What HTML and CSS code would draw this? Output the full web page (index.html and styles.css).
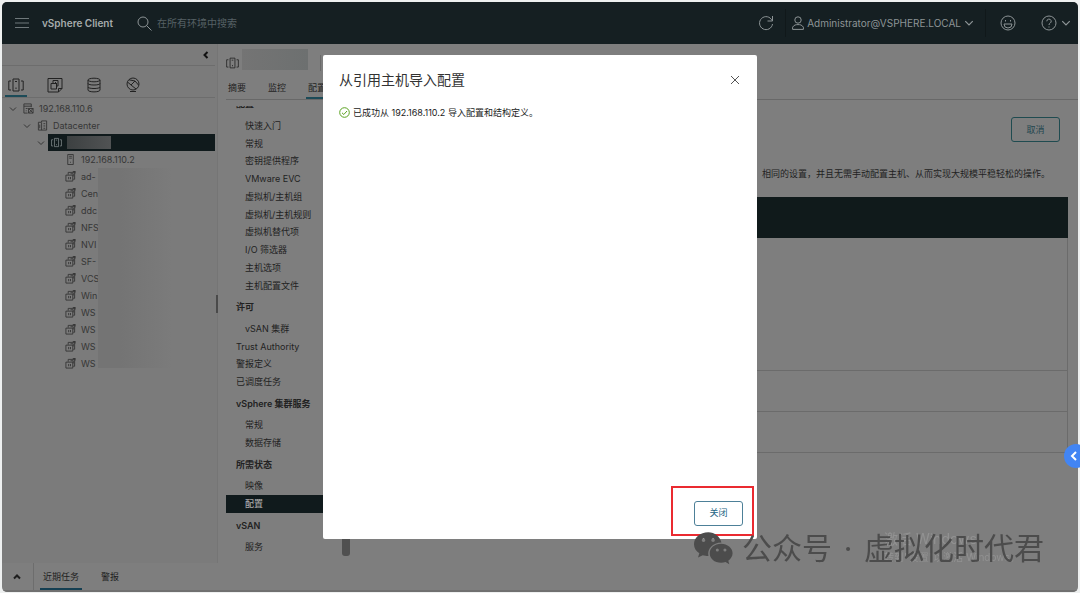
FILE: index.html
```html
<!DOCTYPE html>
<html lang="zh-CN">
<head>
  <meta charset="UTF-8">
  <meta name="viewport" content="width=device-width, initial-scale=1.0">
  <title>vSphere Client</title>
  <link rel="stylesheet" href="styles.css">
</head>
<body>
  <svg class="sprite" aria-hidden="true">
    <symbol id="i-down" viewBox="0 0 8 8"><path d="M1 2.500 4 5.500 7 2.500"/></symbol>
    <symbol id="i-cluster" viewBox="0 0 16 14"><path d="M5 1h6v12H5zM3 3H.8v9H3M13 3h2.200v9H13M7 3.500h2M8 9.500v1.500"/></symbol>
    <symbol id="i-vc" viewBox="0 0 12 12"><path d="M9 4.500V1H1v10h4M1 3.500h8M3 6h2M3 8.500h1M6 6h5v5H6zM6 6l5 5M11 6l-5 5"/></symbol>
    <symbol id="i-dc" viewBox="0 0 12 12"><path d="M1.500 11V2.500H5V1h5.500v10zM5 3v8M7 4h2M7 6.500h2M7 9h2M3 5v4"/></symbol>
    <symbol id="i-host" viewBox="0 0 10 12"><path d="M2 .5h6v11H2zM3.500 2.500h3M3.500 4.500h3M5 8.500v1"/></symbol>
    <symbol id="i-vm" viewBox="0 0 12 12"><path d="M3.500 4V1.500h7V9H9M1 4.500h7.500V11H1zM4 6.500v2.500M6 6.500v2.500M6 3h3v3"/><path class="fill" d="M8 0h3.500v3z"/></symbol>
  </svg>

  <div class="app">
    <header class="topbar">
      <button class="icon-btn menu" aria-label="菜单">
        <svg width="14" height="12" viewBox="0 0 14 12"><path d="M0 1.500h14M0 6h14M0 10.500h14"/></svg>
      </button>
      <a class="brand" href="#">vSphere Client</a>
      <form class="search">
        <svg width="15" height="15" viewBox="0 0 15 15"><circle cx="6" cy="6" r="5"/><path d="m9.500 9.500 5 5"/></svg>
        <input type="text" aria-label="搜索" placeholder="在所有环境中搜索">
      </form>
      <div class="tools">
        <button class="icon-btn refresh" aria-label="刷新">
          <svg width="16" height="16" viewBox="0 0 16 16"><path d="M14 5.500A6.500 6.500 0 1 0 14.500 9M14.500 1v5h-5"/></svg>
        </button>
        <button class="icon-btn user">
          <svg width="12" height="14" viewBox="0 0 12 14"><circle cx="6" cy="4" r="3.200"/><path d="M.6 13.400v-2.200C2 8.800 4 8.600 6 8.600s4 .2 5.400 2.600v2.200z"/></svg>
          <span>Administrator@VSPHERE.LOCAL</span>
          <svg width="10" height="10"><use href="#i-down"/></svg>
        </button>
        <button class="icon-btn smile" aria-label="反馈">
          <svg width="16" height="16" viewBox="0 0 16 16"><circle cx="8" cy="8" r="7"/><path d="M4 9a4 4 0 0 0 8 0z"/><path d="M5.500 5v1.500M10.500 5v1.500"/></svg>
        </button>
        <button class="icon-btn help" aria-label="帮助">
          <svg width="16" height="16" viewBox="0 0 16 16"><circle cx="8" cy="8" r="7"/><path d="M5.800 6.300a2.200 2.200 0 1 1 3.300 1.900C8.300 8.700 8 9 8 10M8 11.500v1"/></svg>
          <svg width="10" height="10"><use href="#i-down"/></svg>
        </button>
      </div>
    </header>

    <div class="body">
      <aside class="sidebar">
        <div class="collapse">
          <button class="icon-btn" aria-label="折叠">
            <svg width="8" height="8" viewBox="0 0 8 8"><path d="M5.500 1 2.500 4l3 3"/></svg>
          </button>
        </div>
        <nav class="inv-tabs">
          <a class="active" href="#" aria-label="主机和集群"><svg width="16" height="14"><use href="#i-cluster"/></svg></a>
          <a href="#" aria-label="虚拟机"><svg width="16" height="16" viewBox="0 0 16 16"><path d="M1 1.500h14v10l-3.500 3.500H1zM15 11.500h-3.500V15M6 6V3.500h5V9H9.500M4 6.500h5.500V12H4zM8 5l2 2"/></svg></a>
          <a href="#" aria-label="存储"><svg width="16" height="16" viewBox="0 0 16 16"><path d="M2 3v10c0 2.500 12 2.500 12 0V3M2 6.500c0 2 12 2 12 0M2 10c0 2 12 2 12 0"/><ellipse cx="8" cy="3" rx="6" ry="1.800"/></svg></a>
          <a href="#" aria-label="网络"><svg width="16" height="16" viewBox="0 0 16 16"><circle cx="8" cy="7" r="6"/><path d="M2.500 5 6 8l4-4 3.500 4M6 8l5 4M10 4 4 2.800M5 14.500h6"/></svg></a>
        </nav>
        <div class="tree-wrap">
          <ul class="tree">
            <li class="l0"><svg class="caret"><use href="#i-down"/></svg><svg class="ico"><use href="#i-vc"/></svg>192.168.110.6</li>
            <li class="l1"><svg class="caret"><use href="#i-down"/></svg><svg class="ico"><use href="#i-dc"/></svg>Datacenter</li>
            <li class="l2"><svg class="caret"><use href="#i-down"/></svg><div class="selected"><svg class="ico"><use href="#i-cluster"/></svg><span class="mask"></span></div></li>
            <li class="l3"><svg class="ico"><use href="#i-host"/></svg>192.168.110.2</li>
            <li class="l3"><svg class="ico"><use href="#i-vm"/></svg><span class="vm">ad-</span></li>
            <li class="l3"><svg class="ico"><use href="#i-vm"/></svg><span class="vm">Cen</span></li>
            <li class="l3"><svg class="ico"><use href="#i-vm"/></svg><span class="vm">ddc</span></li>
            <li class="l3"><svg class="ico"><use href="#i-vm"/></svg><span class="vm">NFS</span></li>
            <li class="l3"><svg class="ico"><use href="#i-vm"/></svg><span class="vm">NVI</span></li>
            <li class="l3"><svg class="ico"><use href="#i-vm"/></svg><span class="vm">SF-</span></li>
            <li class="l3"><svg class="ico"><use href="#i-vm"/></svg><span class="vm">VCS</span></li>
            <li class="l3"><svg class="ico"><use href="#i-vm"/></svg><span class="vm">Win</span></li>
            <li class="l3"><svg class="ico"><use href="#i-vm"/></svg><span class="vm">WS</span></li>
            <li class="l3"><svg class="ico"><use href="#i-vm"/></svg><span class="vm">WS</span></li>
            <li class="l3"><svg class="ico"><use href="#i-vm"/></svg><span class="vm">WS</span></li>
            <li class="l3"><svg class="ico"><use href="#i-vm"/></svg><span class="vm">WS</span></li>
          </ul>
          <div class="smudge"></div>
        </div>
        <span class="grip"></span>
      </aside>

      <main class="main">
        <div class="object">
          <svg width="13" height="12"><use href="#i-cluster"/></svg>
          <span class="mask"></span>
          <span class="sep"></span>
        </div>
        <nav class="tabs">
          <a href="#">摘要</a>
          <a href="#">监控</a>
          <a class="active" href="#">配置</a>
        </nav>
        <div class="config">
          <nav class="config-nav">
            <div class="cut">配置</div>
            <a href="#">快速入门</a>
            <a href="#">常规</a>
            <a href="#">密钥提供程序</a>
            <a href="#">VMware EVC</a>
            <a href="#">虚拟机/主机组</a>
            <a href="#">虚拟机/主机规则</a>
            <a href="#">虚拟机替代项</a>
            <a href="#">I/O 筛选器</a>
            <a href="#">主机选项</a>
            <a href="#">主机配置文件</a>
            <h4>许可</h4>
            <a href="#">vSAN 集群</a>
            <a class="top" href="#">Trust Authority</a>
            <a class="top" href="#">警报定义</a>
            <a class="top" href="#">已调度任务</a>
            <h4>vSphere 集群服务</h4>
            <a href="#">常规</a>
            <a href="#">数据存储</a>
            <h4>所需状态</h4>
            <a href="#">映像</a>
            <a class="active" href="#">配置</a>
            <h4>vSAN</h4>
            <a href="#">服务</a>
          </nav>
          <div class="scroll"><span></span></div>
          <section class="content">
            <button class="btn cancel">取消</button>
            <p class="desc">相同的设置，并且无需手动配置主机、从而实现大规模平稳轻松的操作。</p>
            <div class="band"></div>
            <div class="panel"></div>
            <div class="panel-row"></div>
            <div class="panel-row"></div>
          </section>
        </div>
      </main>
    </div>

    <footer class="bottom">
      <button class="icon-btn" aria-label="展开">
        <svg width="8" height="8" viewBox="0 0 8 8"><path d="M1 5.500 4 2.500l3 3"/></svg>
      </button>
      <nav>
        <a class="active" href="#">近期任务</a>
        <a href="#">警报</a>
      </nav>
    </footer>
  </div>

  <div class="overlay">
    <div class="modal" role="dialog" aria-labelledby="modal-title">
      <div class="modal-head">
        <h3 id="modal-title">从引用主机导入配置</h3>
        <button class="icon-btn" aria-label="关闭窗口">
          <svg width="10" height="10" viewBox="0 0 10 10"><path d="m1 1 8 8M9 1 1 9"/></svg>
        </button>
      </div>
      <p class="result">
        <svg width="11" height="11" viewBox="0 0 11 11"><circle cx="5.500" cy="5.500" r="4.800"/><path d="m3 5.800 1.800 1.700L8 4"/></svg>
        <span>已成功从 192.168.110.2 导入配置和结构定义。</span>
      </p>
      <div class="modal-foot">
        <button class="btn close">关闭</button>
      </div>
      <span class="marker"></span>
    </div>
  </div>

  <div class="activate">
    <strong>激活 Windows</strong>
    <span>转到"设置"以激活 Windows。</span>
  </div>

  <div class="watermark">
    <svg width="40" height="33" viewBox="0 0 42 34">
      <path fill-rule="evenodd" d="M15 0C6.500 0 0 5.500 0 12.500c0 4 2.200 7.300 5.600 9.600L4.200 26.500l5-2.500c1.900.5 3.600.9 6 .9C13.600 17.500 19.500 11 28.800 10.800 27.500 4.600 21.800 0 15 0zM10 6.500a1.900 1.900 0 1 1 0 3.800 1.900 1.900 0 0 1 0-3.800zM20 6.500a1.900 1.900 0 1 1 0 3.800 1.900 1.900 0 0 1 0-3.800z"/>
      <path fill-rule="evenodd" d="M28.500 12C21.500 12 16.500 16.500 16.500 22s5 10 12 10c1.600 0 3.100-.3 4.600-.7l4 2.200-1.100-3.700c2.700-2 4.500-4.700 4.500-7.800 0-5.500-5.500-10-12-10zM24.500 17a1.600 1.600 0 1 1 0 3.200 1.600 1.600 0 0 1 0-3.200zM32.500 17a1.600 1.600 0 1 1 0 3.200 1.600 1.600 0 0 1 0-3.200z"/>
    </svg>
    <span>公众号</span><span class="dot">·</span><span>虚拟化时代君</span>
  </div>

  <button class="drawer" aria-label="打开侧栏">
    <svg width="8" height="10" viewBox="0 0 8 10"><path d="M6 1 2 5l4 4"/></svg>
  </button>
</body>
</html>
```
FILE: styles.css
```css
* {
  box-sizing: border-box;
}

body {
  margin: 0;
  background-color: #eef0f0;
  color: #222;
  font-family: Inter, "Noto Sans CJK SC", sans-serif;
  font-size: 9px;
  line-height: 16px;
}

a {
  color: inherit;
  text-decoration: none;
}

ul,
p,
h3,
h4 {
  margin: 0;
  padding: 0;
  list-style: none;
}

svg {
  flex: none;
  fill: none;
  stroke: currentColor;
  stroke-width: 1;
}

.sprite {
  position: absolute;
  width: 0;
  height: 0;
}

.fill {
  fill: currentColor;
  stroke: none;
}

button {
  font: inherit;
  cursor: pointer;
}

.icon-btn {
  display: flex;
  align-items: center;
  padding: 0;
  border: none;
  background: none;
  color: inherit;
}

.app {
  display: flex;
  flex-direction: column;
  min-height: calc(100vh - 3px);
  margin: 2px 2px 1px;
  border-radius: 5px;
  background-color: #7e7e7e;
  overflow: hidden;
}

/* top bar */
.topbar {
  display: flex;
  align-items: center;
  height: 42px;
  padding: 0 7px 0 13px;
  background-color: #151f22;
  color: #8d9496;
}

.menu {
  color: #6f787b;
}

.brand {
  margin-left: 13px;
  color: #a6abac;
  font-size: 10px;
  font-weight: 600;
}

.search {
  display: flex;
  align-items: center;
  gap: 5px;
  margin-left: 24px;
}

.search input {
  width: 120px;
  padding: 0;
  border: none;
  outline: none;
  background: none;
  color: inherit;
  font: inherit;
  font-size: 10px;
}

.search input::placeholder {
  color: #566165;
  opacity: 1;
}

.tools {
  display: flex;
  align-items: center;
  margin-left: auto;
}

.tools .icon-btn {
  height: 28px;
}

.user {
  gap: 3px;
  margin-left: 11px;
  padding: 0 11px 0 6px;
  border: solid #10181a;
  border-width: 0 1px;
}

.user span {
  font-size: 10px;
}

.tools .smile {
  margin: 0 25px 0 14px;
}

.help {
  gap: 4px;
}

.body {
  display: flex;
  flex: 1;
}

/* inventory */
.sidebar {
  position: relative;
  width: 216px;
  padding-right: 2px;
  border-right: 1px solid #757575;
  background-color: #7b7b7b;
}

.collapse {
  display: flex;
  justify-content: flex-end;
  height: 22px;
  padding-right: 5px;
  border-bottom: 1px solid #6d6d6d;
  color: #111;
}

.collapse svg,
.bottom svg {
  stroke-width: 2;
}

.inv-tabs {
  display: flex;
  gap: 17px;
  height: 32px;
  padding-left: 3px;
  border-bottom: 1px solid #6d6d6d;
}

.inv-tabs a {
  display: flex;
  align-items: center;
  justify-content: center;
  width: 22px;
  padding-top: 8px;
  border-bottom: 2px solid transparent;
}

.inv-tabs .active {
  border-color: #1c4b58;
}

.tree-wrap {
  position: relative;
  padding-top: 2px;
}

.tree li {
  display: flex;
  align-items: center;
  height: 17px;
  color: #363636;
}

.caret {
  width: 8px;
  height: 8px;
  margin-right: 6px;
}

.ico {
  width: 11px;
  height: 11px;
  margin-right: 5px;
}

.l0 {
  padding-left: 7px;
}

.l1 {
  padding-left: 21px;
}

.l2 {
  padding-left: 35px;
}

.l3 {
  padding-left: 63px;
}

.l2 .caret {
  margin-right: 3px;
}

.selected {
  display: flex;
  flex: 1;
  align-items: center;
  height: 17px;
  padding-left: 3px;
  background-color: #101a1c;
  color: #8d9496;
}

.selected .mask {
  width: 44px;
  height: 13px;
  background: linear-gradient(90deg, #3c4041, #515354);
}

.vm {
  width: 20px;
  white-space: nowrap;
}

.smudge {
  position: absolute;
  top: 70px;
  left: 96px;
  width: 74px;
  height: 200px;
  background: linear-gradient(90deg, #747474 30%, #7b7b7b);
}

.grip {
  position: absolute;
  top: 251px;
  right: -1px;
  width: 2px;
  height: 18px;
  background-color: #4a4a4a;
}

/* main pane */
.main {
  display: flex;
  flex: 1;
  flex-direction: column;
  min-width: 0;
  padding-left: 8px;
}

.object {
  display: flex;
  align-items: center;
  height: 33px;
  padding-top: 4px;
}

.object .mask {
  width: 66px;
  height: 21px;
  margin: 0 12px 6px 3px;
  background: linear-gradient(90deg, #747474, #6d7070);
}

.object .sep {
  width: 1px;
  height: 16px;
  background-color: #6a6a6a;
}

.tabs {
  display: flex;
  gap: 18px;
  height: 23px;
  border-bottom: 1px solid #686868;
  line-height: 22px;
}

.tabs a {
  padding: 0 2px;
}

.tabs .active {
  border-bottom: 2px solid #1c4b58;
}

.config {
  display: flex;
  flex: 1;
}

.config-nav {
  display: flex;
  flex-direction: column;
  width: 114px;
  padding: 6px 0 7px;
}

.cut {
  display: flex;
  align-items: flex-end;
  height: 4px;
  margin: 0 0 7px 10px;
  overflow: hidden;
  font-weight: 700;
  line-height: 12px;
}

.config-nav a,
.config-nav h4 {
  display: flex;
  flex: 7 1 0;
  align-items: center;
  padding-left: 19px;
}

.config-nav h4 {
  flex-grow: 10;
  padding-left: 10px;
  font-size: 9px;
  font-weight: 600;
}

.config-nav .top {
  padding-left: 10px;
}

.config-nav .active {
  background-color: #101a1c;
  color: #a9a9a9;
  font-weight: 500;
}

.scroll {
  display: flex;
  align-items: flex-end;
  width: 10px;
  padding-bottom: 7px;
}

.scroll span {
  width: 8px;
  height: 120px;
  margin-left: 2px;
  border-radius: 3px;
  background-color: #505050;
}

.content {
  flex: 1;
  padding: 17px 10px 0 20px;
}

.btn {
  display: block;
  width: 49px;
  height: 25px;
  padding: 0;
  border: 1px solid #1f4b50;
  border-radius: 3px;
  background: none;
  color: #23464f;
}

.cancel {
  margin: 0 8px 0 auto;
}

.desc {
  margin: 24px 18px 15px 0;
  text-align: right;
}

.band {
  height: 41px;
  background-color: #101a1b;
}

.panel {
  height: 133px;
}

.panel,
.panel-row {
  border: solid #6b6b6b;
  border-width: 0 1px 1px;
}

.panel-row {
  height: 41px;
}

/* recent tasks bar */
.bottom {
  display: flex;
  height: 29px;
  padding-left: 11px;
  border-bottom: 2px solid #707070;
  color: #1e1e1e;
}

.bottom nav {
  display: flex;
  gap: 16px;
  margin-left: 12px;
  padding-left: 6px;
  border-left: 1px solid #6d6d6d;
}

.bottom a {
  padding: 0 3px;
  line-height: 27px;
}

.bottom .active {
  border-bottom: 2px solid #153f52;
}

/* dialog */
.overlay {
  position: fixed;
  inset: 0;
  display: flex;
  align-items: center;
  justify-content: center;
}

.modal {
  position: relative;
  display: flex;
  flex-direction: column;
  width: 434px;
  min-height: 484px;
  padding: 14px 14px 13px 16px;
  border-radius: 2px;
  background-color: #fff;
}

.modal-head {
  display: flex;
  align-items: center;
  justify-content: space-between;
  height: 22px;
  padding-right: 3px;
}

.modal h3 {
  color: #333;
  font-size: 14px;
  font-weight: 400;
}

.modal-head .icon-btn {
  color: #555;
}

.result {
  display: flex;
  align-items: center;
  gap: 3px;
  margin-top: 14px;
  color: #222;
}

.result svg {
  color: #5aa220;
}

.modal-foot {
  display: flex;
  justify-content: flex-end;
  margin-top: auto;
}

.close {
  border-color: #4d8098;
  color: #1d6484;
}

.marker {
  position: absolute;
  right: 3px;
  bottom: 3px;
  width: 83px;
  height: 50px;
  border: 2px solid #ea2a30;
  pointer-events: none;
}

.activate {
  position: fixed;
  right: 40px;
  bottom: 27px;
  display: flex;
  flex-direction: column;
  width: 156px;
  color: #929292;
  font-size: 10px;
  line-height: 18px;
}

.activate strong {
  font-size: 14px;
  font-weight: 400;
}

.watermark {
  position: fixed;
  right: 36px;
  bottom: 26px;
  display: flex;
  align-items: center;
  color: #4c4c4c;
  font-size: 30px;
  line-height: 38px;
}

.watermark svg {
  margin-right: 8px;
  fill: currentColor;
  stroke: none;
}

.dot {
  width: 32px;
  text-align: center;
}

.drawer {
  position: fixed;
  right: -8px;
  bottom: 125px;
  width: 24px;
  height: 24px;
  padding: 0 0 0 6px;
  border: none;
  border-radius: 50%;
  background-color: #4285f4;
  color: #fff;
  line-height: 0;
  text-align: left;
}

.drawer svg {
  stroke-width: 2;
}
```
